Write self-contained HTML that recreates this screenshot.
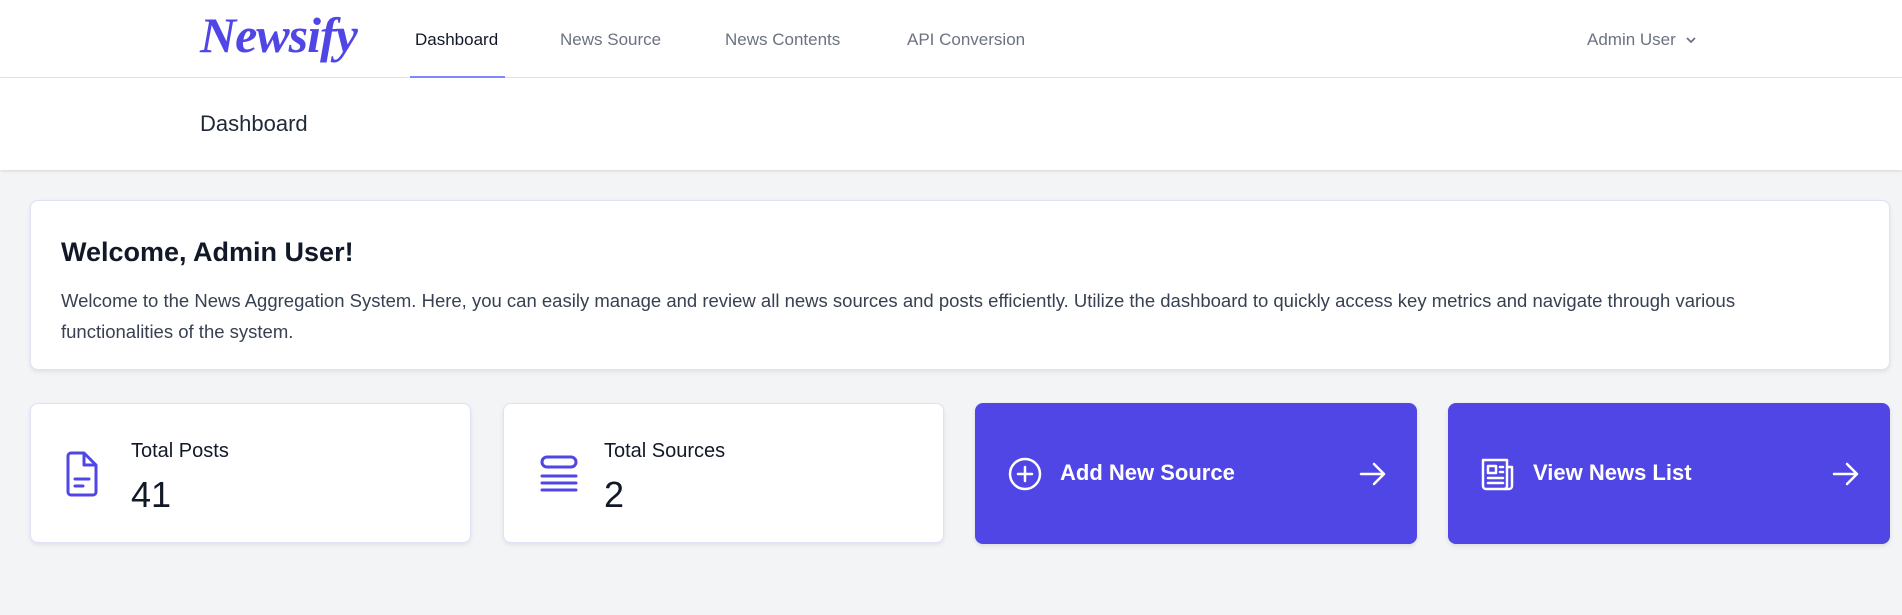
<!DOCTYPE html>
<html><head><meta charset="utf-8"><style>
*{box-sizing:border-box;margin:0;padding:0}
body{width:1902px;height:615px;background:#f3f4f6;font-family:"Liberation Sans",sans-serif;color:#111827;overflow:hidden;position:relative}
.nav{position:absolute;left:0;top:0;width:1902px;height:78px;background:#fff;border-bottom:1px solid #e5e7eb}
.logo{position:absolute;left:200px;top:6px;font-family:"Liberation Serif",serif;font-style:italic;font-weight:bold;font-size:50px;color:#4f46e5;letter-spacing:-1px}
.nl{position:absolute;top:30px;font-size:17px;color:#6b7280}
.sub{position:absolute;left:0;top:78px;width:1902px;height:92px;background:#fff;box-shadow:0 1px 3px rgba(0,0,0,.12)}
.card{position:absolute;background:#fff;border-radius:8px;border:1px solid #dfe1f5;box-shadow:0 2px 5px rgba(0,0,0,.08)}
.btn{position:absolute;background:#4f46e5;border-radius:8px;color:#fff;box-shadow:0 2px 5px rgba(0,0,0,.1)}
.lbl{position:absolute;left:100px;top:36px;font-size:20px;font-weight:500}
.num{position:absolute;left:100px;top:70px;font-size:36px;font-weight:500}
.bt{position:absolute;left:85px;top:57px;font-size:22px;font-weight:bold}
</style></head><body>
<div class="nav">
<div class="logo">Newsify</div>
<div class="nl" style="left:415px;color:#111827">Dashboard</div>
<div style="position:absolute;left:410px;top:76px;width:95px;height:2px;background:#818cf8"></div>
<div class="nl" style="left:560px">News Source</div>
<div class="nl" style="left:725px">News Contents</div>
<div class="nl" style="left:907px">API Conversion</div>
<div class="nl" style="left:1587px">Admin User <svg width="12" height="10" viewBox="0 0 12 10" style="margin-left:4px"><path d="M2 3l4 4 4-4" stroke="#6b7280" stroke-width="1.8" fill="none"/></svg></div>
</div>
<div class="sub"><div style="position:absolute;left:200px;top:33px;font-size:22px;color:#1f2937">Dashboard</div></div>

<div class="card" style="left:30px;top:200px;width:1860px;height:170px">
<div style="position:absolute;left:30px;top:36px;font-size:27px;font-weight:bold">Welcome, Admin User!</div>
<div style="position:absolute;left:30px;top:84px;width:1770px;font-size:18.5px;line-height:31px;color:#374151">Welcome to the News Aggregation System. Here, you can easily manage and review all news sources and posts efficiently. Utilize the dashboard to quickly access key metrics and navigate through various functionalities of the system.</div>
</div>

<div class="card" style="left:30px;top:403px;width:441px;height:140px">
<svg style="position:absolute;left:34px;top:47px" width="34" height="46" viewBox="0 0 34 46" fill="none" stroke="#4f46e5" stroke-width="3" stroke-linejoin="round"><path d="M3 5a3 3 0 0 1 3-3h13l12 12v27a3 3 0 0 1-3 3H6a3 3 0 0 1-3-3z"/><path d="M19 2v12h12"/><path d="M10 28h14M10 35h8" stroke-linecap="round"/></svg>
<div class="lbl">Total Posts</div><div class="num">41</div></div>

<div class="card" style="left:503px;top:403px;width:441px;height:140px">
<svg style="position:absolute;left:35px;top:50px" width="40" height="40" viewBox="0 0 40 40" fill="none" stroke="#4f46e5" stroke-width="3" stroke-linecap="round"><rect x="3" y="3" width="34" height="10" rx="5"/><path d="M3 22h34M3 29h34M3 36h34"/></svg>
<div class="lbl">Total Sources</div><div class="num">2</div></div>

<div class="btn" style="left:975px;top:403px;width:442px;height:141px">
<svg style="position:absolute;left:33px;top:54px" width="34" height="34" viewBox="0 0 34 34" fill="none" stroke="#fff" stroke-width="2.5" stroke-linecap="round"><circle cx="17" cy="17" r="15"/><path d="M17 10v14M10 17h14"/></svg>
<div class="bt">Add New Source</div>
<svg style="position:absolute;left:384px;top:59px" width="28" height="24" viewBox="0 0 28 24" fill="none" stroke="#fff" stroke-width="2.5" stroke-linecap="round" stroke-linejoin="round"><path d="M2 12h23M15 2l10 10-10 10"/></svg>
</div>

<div class="btn" style="left:1448px;top:403px;width:442px;height:141px">
<svg style="position:absolute;left:32px;top:54px" width="36" height="34" viewBox="0 0 36 34" fill="none" stroke="#fff" stroke-width="2.5" stroke-linejoin="round"><path d="M3 3h24v26a3 3 0 0 1-3 3H6a3 3 0 0 1-3-3z"/><path d="M27 10h5v19a3 3 0 0 1-3 3h-5"/><rect x="8" y="9" width="8" height="7"/><path d="M20 10h3M20 15h3M8 21h15M8 26h15" stroke-linecap="round"/></svg>
<div class="bt">View News List</div>
<svg style="position:absolute;left:384px;top:59px" width="28" height="24" viewBox="0 0 28 24" fill="none" stroke="#fff" stroke-width="2.5" stroke-linecap="round" stroke-linejoin="round"><path d="M2 12h23M15 2l10 10-10 10"/></svg>
</div>
</body></html>
